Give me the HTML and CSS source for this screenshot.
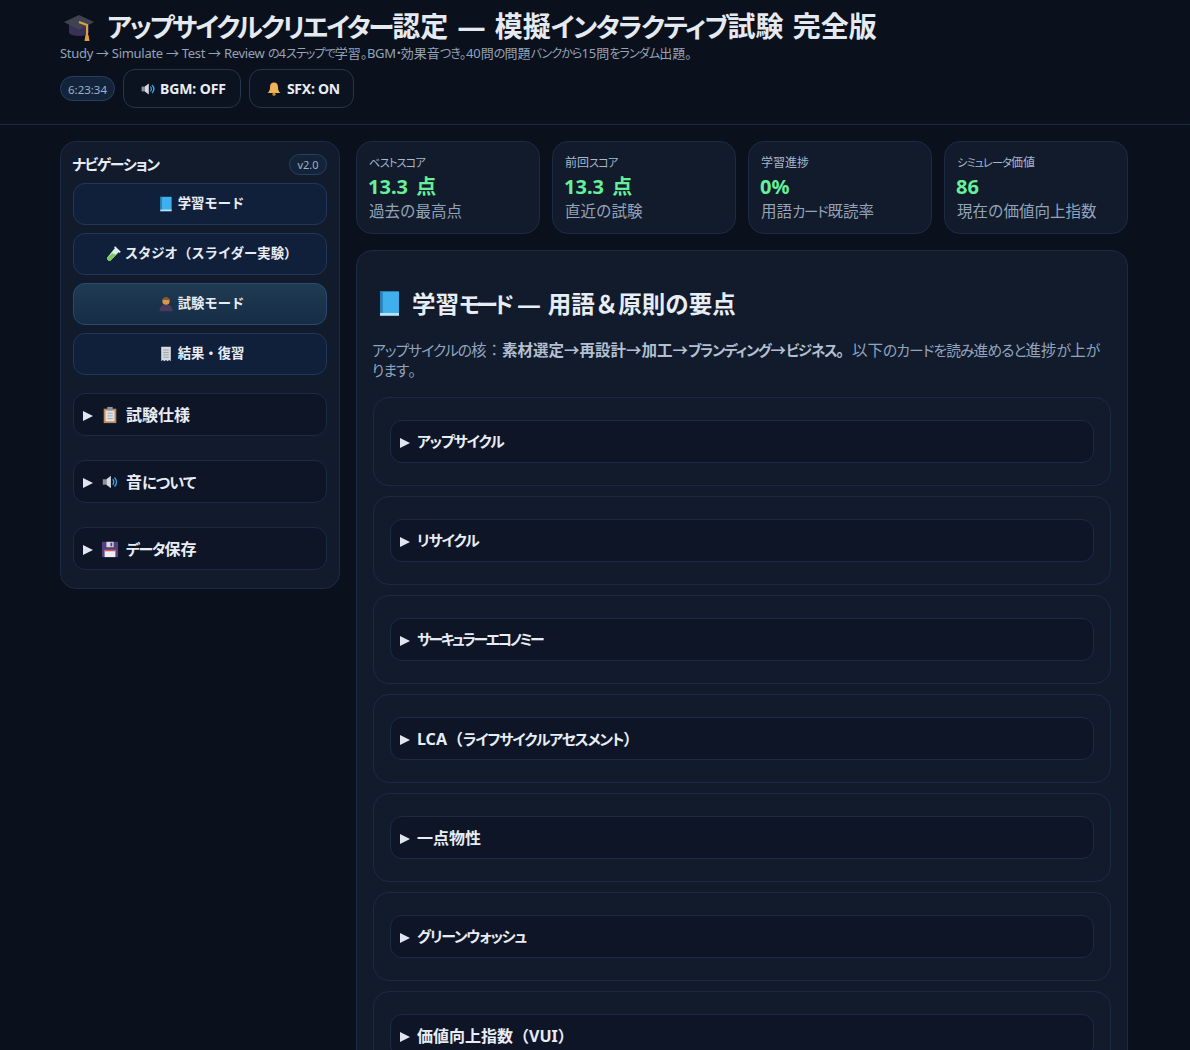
FILE: index.html
```html
<!DOCTYPE html>
<html lang="ja">
<head>
<meta charset="utf-8">
<title>アップサイクルクリエイター認定</title>
<link rel="stylesheet" href="styles.css">
</head>
<body>
<svg class="defs" width="0" height="0" aria-hidden="true">
  <symbol id="i-cap" viewBox="0 0 32 32">
    <path d="M6 14v9c3 4 17 4 20 0v-9z" fill="#3a2f55"/>
    <path d="M1 12 16 5l15 7-15 8z" fill="#3f4350"/>
    <path d="M16 12l8 3v11" fill="none" stroke="#e0a040" stroke-width="2"/>
    <path d="M22.500 25h3l1 6h-5z" fill="#e0a040"/>
  </symbol>
  <symbol id="i-speaker" viewBox="0 0 20 20">
    <path d="M2 7h4v6H2z" fill="#8f9298"/>
    <path d="M6 7l5-4v14l-5-4z" fill="#d8dade"/>
    <path d="M13 7c1.500 1.500 1.500 4.500 0 6M15 5c3 3 3 7 0 10" fill="none" stroke="#3ea6e8" stroke-width="1.500"/>
  </symbol>
  <symbol id="i-bell" viewBox="0 0 20 20">
    <path d="M10 2c-3.500 0-5 2.500-5 6 0 3-1 5-3 7h16c-2-2-3-4-3-7 0-3.500-1.500-6-5-6z" fill="#eeb45a"/>
    <circle cx="10" cy="16.500" r="2" fill="#c98a35"/>
  </symbol>
  <symbol id="i-book" viewBox="0 0 20 20">
    <path d="M3 1h14v18H3z" fill="#3fb0ee"/>
    <path d="M3 1h2v18H3z" fill="#2a7fb8"/>
    <path d="M3 17h14v2H3z" fill="#bfe2f5"/>
  </symbol>
  <symbol id="i-tube" viewBox="0 0 20 20">
    <path d="M13 2l5 5L7 18c-2 1.500-5-1-4-4z" fill="#d9efe6"/>
    <path d="M9 9l5 2-7 7c-2 1.500-5-1-4-4z" fill="#7ccb5a"/>
    <path d="M12 1l7 7" stroke="#e8eef2" stroke-width="2"/>
  </symbol>
  <symbol id="i-student" viewBox="0 0 20 20">
    <path d="M2 19c0-6 3-8 8-8s8 2 8 8z" fill="#4a3a60"/>
    <circle cx="10" cy="6.500" r="4.500" fill="#d69a45"/>
    <path d="M5.500 5c1-4 8-4 9 0z" fill="#8a5a2c"/>
  </symbol>
  <symbol id="i-page" viewBox="0 0 20 20">
    <path d="M4 1h12v18l-2-1.500-2 1.500-2-1.500L8 19l-2-1.500L4 19z" fill="#d7dadf"/>
    <path d="M6.500 5h7M6.500 8h7M6.500 11h7M6.500 14h7" stroke="#8d9299" stroke-width="1"/>
  </symbol>
  <symbol id="i-clip" viewBox="0 0 20 20">
    <path d="M3 3h14v16H3z" fill="#c08a52"/>
    <path d="M5 5h10v12H5z" fill="#dfe3e8"/>
    <path d="M7 8h6M7 11h6M7 14h6" stroke="#9a9fa6" stroke-width="1"/>
    <path d="M7 1h6v4H7z" fill="#8e9299"/>
  </symbol>
  <symbol id="i-disk" viewBox="0 0 20 20">
    <path d="M1 2h18v17H1z" fill="#563f80"/>
    <path d="M6 2h8v6H6z" fill="#d7dadf"/>
    <path d="M10.500 3h2v4h-2z" fill="#563f80"/>
    <path d="M4 11h12v8H4z" fill="#eceef1"/>
    <path d="M4 11h12v1.500H4z" fill="#d9534f"/>
  </symbol>
</svg>

<header class="top">
  <h1 class="title"><svg class="emoji emoji-cap"><use href="#i-cap"/></svg><span><span class="k-head">アップサイクルクリエイター</span>認定 — 模擬<span class="k-title">インタラクティブ</span>試験 完全版</span></h1>
  <p class="subtitle"><span class="lat">Study → Simulate → Test → Review</span> <span class="k">の</span>4<span class="k">ステップで</span>学習<span class="k-soft">。</span><span class="lat">BGM</span><span class="k">・</span>効果音<span class="k">つき</span><span class="k-soft">。</span>40問<span class="k">の</span>問題<span class="k">バンクから</span>15問<span class="k">を</span><span class="k">ランダム</span>出題<span class="k-soft">。</span></p>
  <div class="controls">
    <span class="clock">6:23:34</span>
    <button class="ctl"><svg class="emoji"><use href="#i-speaker"/></svg>BGM: OFF</button>
    <button class="ctl ctl-sfx"><svg class="emoji"><use href="#i-bell"/></svg>SFX: ON</button>
  </div>
</header>

<div class="layout">
  <aside class="panel">
    <div class="nav-head">
      <span class="nav-title"><span class="k">ナビゲーション</span></span>
      <span class="ver">v2.0</span>
    </div>
    <nav class="nav">
      <button class="nav-btn"><svg class="emoji"><use href="#i-book"/></svg>学習モード</button>
      <button class="nav-btn"><svg class="emoji"><use href="#i-tube"/></svg>スタジオ（スライダー実験）</button>
      <button class="nav-btn active"><svg class="emoji"><use href="#i-student"/></svg>試験モード</button>
      <button class="nav-btn"><svg class="emoji"><use href="#i-page"/></svg>結果・復習</button>
    </nav>
    <div class="side-group">
      <details class="disc"><summary><svg class="emoji"><use href="#i-clip"/></svg>試験仕様</summary></details>
      <details class="disc"><summary><svg class="emoji"><use href="#i-speaker"/></svg><span>音<span class="k-title">について</span></span></summary></details>
      <details class="disc"><summary><svg class="emoji"><use href="#i-disk"/></svg><span><span class="k">データ</span>保存</span></summary></details>
    </div>
  </aside>

  <main class="content">
    <section class="stats">
      <div class="stat"><div class="stat-label"><span class="k">ベストスコア</span></div><div class="stat-value">13.3 点</div><div class="stat-note">過去の最高点</div></div>
      <div class="stat"><div class="stat-label">前回<span class="k">スコア</span></div><div class="stat-value">13.3 点</div><div class="stat-note">直近の試験</div></div>
      <div class="stat"><div class="stat-label">学習進捗</div><div class="stat-value">0%</div><div class="stat-note">用語<span class="k">カード</span>既読率</div></div>
      <div class="stat"><div class="stat-label"><span class="k">シミュレータ</span>価値</div><div class="stat-value">86</div><div class="stat-note">現在の価値向上指数</div></div>
    </section>
    <section class="study">
      <h2 class="study-title"><svg class="emoji emoji-h2"><use href="#i-book"/></svg><span>学習<span class="k-mode">モード</span> — 用語＆原則の要点</span></h2>
      <p class="lead"><span class="k-title">アップサイクルの</span>核：<b>素材選定→再設計→加工→<span class="k">ブランディング</span>→<span class="k">ビジネス</span>。</b>以下<span class="k-title">のカードを読み進めると</span>進捗<span class="k-title">が</span>上<span class="k-title">がります</span>。</p>
      <div class="cards">
        <div class="term"><details class="disc"><summary><span class="k">アップサイクル</span></summary></details></div>
        <div class="term"><details class="disc"><summary><span class="k">リサイクル</span></summary></details></div>
        <div class="term"><details class="disc"><summary><span class="k-tight">サーキュラーエコノミー</span></summary></details></div>
        <div class="term"><details class="disc"><summary><span>LCA（<span class="k">ライフサイクルアセスメント</span>）</span></summary></details></div>
        <div class="term"><details class="disc"><summary>一点物性</summary></details></div>
        <div class="term"><details class="disc"><summary><span class="k">グリーンウォッシュ</span></summary></details></div>
        <div class="term"><details class="disc"><summary>価値向上指数（VUI）</summary></details></div>
      </div>
    </section>
  </main>
</div>
</body>
</html>
```

FILE: styles.css
```css
* { box-sizing: border-box; }
html, body { margin: 0; background: #0a101c; }
html { overflow: hidden; height: 1050px; }
body {
  height: 1050px;
  overflow: hidden;
  color: #e8edf5;
  font-family: "Noto Sans", "Noto Sans CJK JP", sans-serif;
}
.k { font-size: 0.93em; font-feature-settings: "palt"; letter-spacing: -0.08em; }
.k-tight { font-size: 0.93em; font-feature-settings: "palt"; letter-spacing: -0.16em; }
.k-head { font-size: 0.95em; font-feature-settings: "palt"; letter-spacing: -0.085em; }
.k-title { font-size: 0.95em; font-feature-settings: "palt"; letter-spacing: -0.06em; }
.k-mode { font-size: 0.95em; font-feature-settings: "palt"; letter-spacing: -0.17em; }
.k-soft { font-feature-settings: "palt"; letter-spacing: -0.03em; }
.lat { letter-spacing: -0.3px; }

.defs { position: absolute; }
.emoji { width: 16px; height: 16px; margin-right: 4px; flex: none; }
.emoji-cap { width: 32px; height: 32px; margin: 0 12px 0 3px; }
.study-title .emoji-h2 { width: 27px; height: 27px; margin-right: 9px; }

.top {
  height: 125px;
  padding: 8px 60px 0;
  border-bottom: 1px solid #1c2b45;
  background: #0a101c;
}
.title {
  display: flex;
  align-items: center;
  margin: 0;
  height: 36px;
  font-size: 28px;
  font-weight: 700;
  line-height: 36px;
  word-spacing: 2px;
  white-space: nowrap;
  color: #e5e9f0;
}
.subtitle {
  margin: 0;
  font-size: 13px;
  line-height: 18px;
  white-space: nowrap;
  color: #94a3b8;
}
.controls {
  display: flex;
  align-items: center;
  gap: 8px;
  margin-top: 6px;
}
.clock {
  width: 55px;
  height: 25px;
  border: 1px solid #27405f;
  border-radius: 13px;
  background: #13233a;
  color: #9fb0c6;
  font-size: 11.500px;
  line-height: 25px;
  text-align: center;
}
.ctl {
  display: flex;
  align-items: center;
  height: 39px;
  padding: 0 14px 0 16px;
  border: 1px solid #25364f;
  border-radius: 12px;
  background: #0c1320;
  color: #e8edf5;
  font: inherit;
  font-size: 14px;
  font-weight: 700;
  letter-spacing: -0.1px;
}
.ctl-sfx { padding-right: 13px; letter-spacing: -0.25px; }
.ctl-sfx .emoji { margin-right: 5px; }

.layout {
  display: grid;
  grid-template-columns: 280px 772px;
  gap: 16px;
  align-items: start;
  padding: 16px 0 0 60px;
}
.panel {
  padding: 11px 12px 18px;
  border: 1px solid #1c2b45;
  border-radius: 16px;
  background: #111b2c;
}
.nav-head {
  display: flex;
  align-items: center;
  justify-content: space-between;
  height: 22px;
  margin-bottom: 8px;
}
.nav-title { margin-left: -1px; font-size: 16px; font-weight: 700; color: #e8edf5; }
.ver {
  width: 38px;
  height: 21px;
  border: 1px solid #27405f;
  border-radius: 11px;
  background: #13233a;
  color: #9fb0c6;
  font-size: 11px;
  line-height: 19px;
  text-align: center;
}
.nav { display: flex; flex-direction: column; gap: 8px; }
.nav-btn {
  display: flex;
  align-items: center;
  justify-content: center;
  height: 42px;
  padding: 0 0 4px 2px;
  border: 1px solid #22365a;
  border-radius: 12px;
  background: #11203a;
  color: #e8edf5;
  font: inherit;
  font-size: 13.330px;
  font-weight: 700;
}
.nav-btn .emoji { width: 16px; height: 16px; margin: 3px 4px 0 0; }
.nav-btn.active {
  border-color: #2c4a70;
  background: linear-gradient(180deg, #1f3b52, #162c46);
}
.side-group {
  display: flex;
  flex-direction: column;
  gap: 24px;
  margin-top: 18px;
}
.disc {
  height: 43px;
  border: 1px solid #1c2b45;
  border-radius: 12px;
  background: #0e1526;
}
.disc summary {
  display: flex;
  align-items: center;
  height: 41px;
  padding: 0 9px 2px;
  font-size: 16px;
  font-weight: 700;
  color: #e8edf5;
  list-style: none;
}
.disc summary::before {
  content: "";
  width: 0;
  height: 0;
  margin: 4px 7px 0 0;
  border-left: 10px solid #dfe6f0;
  border-top: 5px solid transparent;
  border-bottom: 5px solid transparent;
  flex: none;
}
.side-group .disc summary .emoji { width: 18px; height: 18px; margin: 2px 7px 0 1px; }

.stats {
  display: grid;
  grid-template-columns: repeat(4, 184px);
  gap: 12px;
}
.stat {
  height: 93px;
  padding: 12px;
  border: 1px solid #1c2b45;
  border-radius: 16px;
  background: #111b2c;
}
.stat-label { font-size: 12px; line-height: 18px; color: #a9b8cc; }
.stat-value { margin-left: -1px; font-size: 20px; font-weight: 700; line-height: 30px; word-spacing: 3px; color: #66f09a; }
.stat-note { margin-top: -1px; font-size: 15.500px; line-height: 20px; color: #94a3b8; }

.study {
  margin-top: 16px;
  padding: 16px;
  border: 1px solid #1c2b45;
  border-radius: 16px;
  background: #111b2c;
}
.study-title {
  display: flex;
  align-items: center;
  margin: 18px 0 0 3px;
  height: 36px;
  font-size: 23.500px;
  font-weight: 700;
  word-spacing: 1px;
  color: #e8edf5;
}
.lead {
  margin: 19px 0 17px -1px;
  padding-right: 6px;
  font-size: 15.500px;
  line-height: 20px;
  color: #91a4bf;
}
.lead span { line-height: 1; }
.lead b { color: #b4c0d2; font-weight: 700; }
.cards { display: flex; flex-direction: column; gap: 10px; }
.term {
  height: 89px;
  padding: 22px 16px;
  border: 1px solid #1c2b45;
  border-radius: 16px;
  background: #111b2c;
}
```
